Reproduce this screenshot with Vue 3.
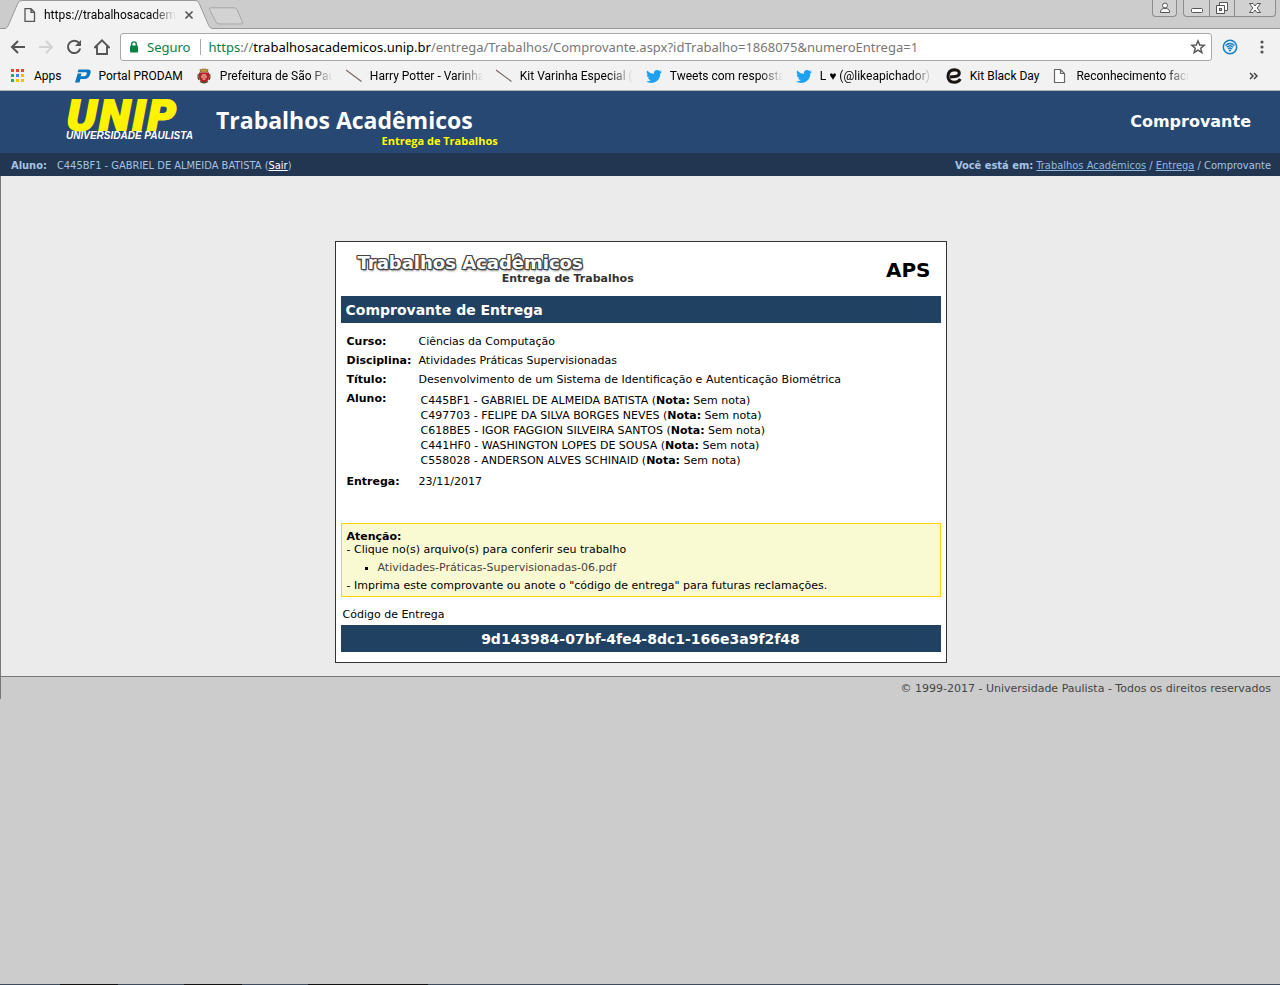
<script setup>
const bookmarks = [
  { icon: 'apps', label: 'Apps' },
  { icon: 'prodam', label: 'Portal PRODAM' },
  { icon: 'crest', label: 'Prefeitura de São Pau', long: true },
  { icon: 'wand', label: 'Harry Potter - Varinha', long: true },
  { icon: 'wand', label: 'Kit Varinha Especial (s', long: true },
  { icon: 'bird', label: 'Tweets com respostas', long: true },
  { icon: 'bird', label: 'L ♥ (@likeapichador)', long: true },
  { icon: 'e', label: 'Kit Black Day' },
  { icon: 'page', label: 'Reconhecimento facia', long: true },
]
const dots = [
  '#ea4335', '#ea4335', '#ea4335',
  '#34a853', '#4285f4', '#fbbc05',
  '#34a853', '#fbbc05', '#fbbc05',
]
const students = [
  'C445BF1 - GABRIEL DE ALMEIDA BATISTA',
  'C497703 - FELIPE DA SILVA BORGES NEVES',
  'C618BE5 - IGOR FAGGION SILVEIRA SANTOS',
  'C441HF0 - WASHINGTON LOPES DE SOUSA',
  'C558028 - ANDERSON ALVES SCHINAID',
]
</script>

<template>
  <div class="window">
    <div class="chrome">
      <div class="tabstrip">
        <div class="tab">
          <svg class="tab-shape" viewBox="0 0 208 29" width="208" height="29" aria-hidden="true">
            <path d="M0 29 L2 27 L13 3 Q14 .5 17 .5 H190 Q193 .5 194 3 L205 27 Q206 28.5 208 28.5 V29 Z" fill="#f2f2f2" />
            <path d="M0 28.5 Q2 28 3 26 L13 3 Q14 .5 17 .5 H190 Q193 .5 194 3 L204 26 Q205 28.500 208 28.500" fill="none" stroke="#999" />
          </svg>
          <svg class="tab-icon" viewBox="0 0 12 14" width="12" height="14" aria-hidden="true">
            <path d="M1 .7 H7 L10.500 4.200 V13.300 H1 Z M7 .7 V4.300 H10.500" fill="none" stroke="#555" stroke-width="1.300" />
          </svg>
          <span class="tab-title fade">https://trabalhosacademi</span>
          <button class="plain tab-close" aria-label="Fechar guia">
            <svg viewBox="0 0 10 10" width="10" height="10"><path d="M1.500 1.500 L8.500 8.500 M8.500 1.500 L1.500 8.500" stroke="#555" stroke-width="1.700" /></svg>
          </button>
        </div>
        <button class="plain new-tab" aria-label="Nova guia">
          <svg viewBox="0 0 36 18" width="36" height="18"><path d="M3 .8 H26 Q28 .8 29 2.500 L34.500 15 Q35 17 33 17 H11 Q9 17 8 15 L1.500 2.500 Q1 .8 3 .8 Z" fill="#d3d3d3" stroke="#a6a6a6" /></svg>
        </button>
        <div class="controls">
          <button class="plain user" aria-label="Usuário">
            <svg viewBox="0 0 12 12" width="12" height="12"><circle cx="6" cy="3.500" r="2.500" fill="#fff" stroke="#555" /><path d="M1.500 10.500 V9 Q2 7 4.500 6.500 H7.500 Q10 7 10.500 9 V10.500 Z" fill="#fff" stroke="#555" /></svg>
          </button>
          <div class="win-buttons">
            <button class="plain" aria-label="Minimizar">
              <svg viewBox="0 0 14 14" width="14" height="14"><rect x="1.500" y="7.500" width="11" height="4" rx="1" fill="#fff" stroke="#555" /></svg>
            </button>
            <button class="plain" aria-label="Restaurar">
              <svg viewBox="0 0 14 14" width="14" height="14"><path d="M4.500 1.500 H12.500 V9.500 H4.500 Z" fill="#fff" stroke="#555" /><path d="M1.500 4.500 H9.500 V12.500 H1.500 Z" fill="#fff" stroke="#555" /><rect x="4.500" y="7.500" width="2" height="2" fill="#ccc" stroke="#555" /></svg>
            </button>
            <button class="plain wide" aria-label="Fechar">
              <svg viewBox="0 0 14 12" width="14" height="12"><path d="M1.500 1.500 H5 L7 4 L9 1.500 H12.500 L9.200 6 L12.500 10.500 H9 L7 8 L5 10.500 H1.500 L4.800 6 Z" fill="#fff" stroke="#555" /></svg>
            </button>
          </div>
        </div>
      </div>

      <div class="toolbar">
        <button class="plain" aria-label="Voltar">
          <svg viewBox="0 0 16 16" width="16" height="16"><path d="M15 8 H2.500 M8 2 L2 8 L8 14" fill="none" stroke="#555" stroke-width="2" /></svg>
        </button>
        <button class="plain" aria-label="Avançar">
          <svg viewBox="0 0 16 16" width="16" height="16"><path d="M1 8 H13.500 M8 2 L14 8 L8 14" fill="none" stroke="#d2d2d2" stroke-width="2" /></svg>
        </button>
        <button class="plain" aria-label="Recarregar">
          <svg viewBox="0 0 16 16" width="16" height="16"><path d="M13.200 4.200 A6.200 6.200 0 1 0 14.200 9.500" fill="none" stroke="#555" stroke-width="2" /><path d="M15 1 V7 H9 Z" fill="#555" /></svg>
        </button>
        <button class="plain" aria-label="Página inicial">
          <svg viewBox="1 0 16 16" width="16" height="16"><path d="M2 8.300 L9 1.400 L16 8.300 H14 V15 H4 V8.300 Z" fill="none" stroke="#555" stroke-width="1.900" /></svg>
        </button>
        <div class="address">
          <svg viewBox="0 0 10 12" width="10" height="12" aria-hidden="true"><rect x="1" y="4.500" width="8" height="7" rx="1" fill="#0b8043" /><path d="M2.700 5 V3.200 A2.300 2.300 0 0 1 7.300 3.200 V5" fill="none" stroke="#0b8043" stroke-width="1.400" /></svg>
          <span class="secure">Seguro</span>
          <span class="url"><span class="green">https</span>://<span class="host">trabalhosacademicos.unip.br</span>/entrega/Trabalhos/Comprovante.aspx?idTrabalho=1868075&amp;numeroEntrega=1</span>
          <input class="address-input" type="text" aria-label="Barra de endereço" />
          <button class="plain star" aria-label="Favoritar">
            <svg viewBox="0 0 16 16" width="16" height="16"><path d="M8 1.800 L9.700 6 L14.200 6.300 L10.700 9.200 L11.900 13.700 L8 11.200 L4.100 13.700 L5.300 9.200 L1.800 6.300 L6.300 6 Z" fill="none" stroke="#555" stroke-width="1.400" /></svg>
          </button>
        </div>
        <button class="plain ext" aria-label="Extensão de rede">
          <svg viewBox="0 0 16 16" width="16" height="16"><circle cx="8" cy="8" r="6.700" fill="#e3f1fa" stroke="#1d7dbf" stroke-width="1.500" /><path d="M3.500 6.500 Q8 2.600 12.500 6.500 M4.800 8.300 Q8 5.300 11.200 8.300 M6.200 10 Q8 8.200 9.800 10" fill="none" stroke="#1d7dbf" stroke-width="1.400" /><circle cx="8" cy="11.500" r="1.100" fill="#1d7dbf" /></svg>
        </button>
        <button class="plain menu" aria-label="Menu">
          <svg viewBox="0 0 4 14" width="4" height="14"><circle cx="2" cy="2" r="1.600" fill="#555" /><circle cx="2" cy="7" r="1.600" fill="#555" /><circle cx="2" cy="12" r="1.600" fill="#555" /></svg>
        </button>
      </div>

      <nav class="bookmarks" aria-label="Favoritos">
        <a v-for="(b, i) in bookmarks" :key="i" href="#" class="bookmark">
          <svg viewBox="0 0 16 16" width="16" height="16" aria-hidden="true">
            <template v-if="b.icon === 'apps'">
              <rect v-for="(c, n) in dots" :key="n" :x="1 + (n % 3) * 5" :y="1 + Math.floor(n / 3) * 5" width="3" height="3" :fill="c" />
            </template>
            <template v-else-if="b.icon === 'prodam'">
              <path d="M3.500 1.500 H13 Q16.500 1.500 15.500 5 Q14.500 10.500 10 11 H5.500 L4.500 14.500 H0 L2.700 5.500 H6.500 L5.800 8.200 H9.500 Q11.300 8 11.800 5.800 Q12.200 4.200 10.800 4.200 H2.500 Z" fill="#0878c4" />
            </template>
            <template v-else-if="b.icon === 'crest'">
              <path d="M4 1.500 L5.500 2 L6.500 .8 L8 1.500 L9.500 .8 L10.500 2 L12 1.500 L11.500 4 H4.500 Z" fill="#c8a23a" stroke="#7a5a22" stroke-width=".8" />
              <path d="M3 4.500 H13 V10 Q12 14 8 15 Q4 14 3 10 Z" fill="#b81f28" />
              <path d="M6 6 H10 V7.500 H11 V10 H9.500 V12 H6.500 V10 H5 V7.500 H6 Z" fill="#d98078" />
              <path d="M2.500 6 Q1.500 9 3 12 M13.500 6 Q14.500 9 13 12 M4 13.500 Q8 16 12 13.500" stroke="#4f4b2c" stroke-width="1.300" fill="none" />
            </template>
            <template v-else-if="b.icon === 'wand'">
              <path d="M0 2 L15.500 13.500" stroke="#75655f" stroke-width="1.100" />
            </template>
            <template v-else-if="b.icon === 'bird'">
              <path d="M16 3.500 Q15.200 4 14.200 4.100 Q15.200 3.400 15.600 2.300 Q14.600 2.900 13.500 3.100 A3.250 3.250 0 0 0 7.900 6 Q3.700 5.700 1.100 2.600 Q-.1 5.300 2.200 7 Q1.400 7 .7 6.600 Q.8 9.100 3.300 9.800 Q2.600 10 1.900 9.900 Q2.700 12 4.900 12.100 Q2.900 13.700 0 13.500 Q4.500 16 8.800 14.200 Q14.300 11.600 14.400 5.200 Q15.300 4.600 16 3.500 Z" fill="#1da1f2" />
            </template>
            <template v-else-if="b.icon === 'e'">
              <path d="M14.300 11 Q12.500 14.300 8.300 14.300 Q2 14 2 8.300 Q2.300 2 8.500 1.800 Q13.300 2 13.300 5.300 Q13.200 8.300 9 8.600 L4 9" fill="none" stroke="#1a1411" stroke-width="3" />
            </template>
            <template v-else>
              <path d="M2.500 1.500 H8.500 L12.500 5.500 V14.500 H2.500 Z M8.500 1.500 V5.500 H12.500" fill="#fff" stroke="#666" stroke-width="1.200" />
            </template>
          </svg>
          <span :class="{ fade: b.long, long: b.long }">{{ b.label }}</span>
        </a>
        <button class="plain more" aria-label="Mais favoritos">
          <svg viewBox="0 0 9 8" width="9" height="8"><path d="M1 1 L4 4 L1 7 M5 1 L8 4 L5 7" fill="none" stroke="#444" stroke-width="1.500" /></svg>
        </button>
      </nav>
    </div>

    <header class="banner">
      <div class="unip">
        <span class="unip-name">UNIP</span>
        <span class="unip-sub">UNIVERSIDADE PAULISTA</span>
      </div>
      <div class="system">
        <span class="system-name">Trabalhos Acadêmicos</span>
        <span class="system-sub">Entrega de Trabalhos</span>
      </div>
      <h1>Comprovante</h1>
    </header>
    <div class="crumbs">
      <div><b class="who">Aluno:</b>C445BF1 - GABRIEL DE ALMEIDA BATISTA (<a href="#" class="exit">Sair</a>)</div>
      <div><b>Você está em:</b> <a href="#">Trabalhos Acadêmicos</a> / <a href="#">Entrega</a> / Comprovante</div>
    </div>

    <main>
      <section class="card">
        <div class="card-head">
          <div class="mark">
            <span class="mark-name">Trabalhos Acadêmicos</span>
            <span class="mark-sub">Entrega de Trabalhos</span>
          </div>
          <strong class="kind">APS</strong>
        </div>
        <h2>Comprovante de Entrega</h2>
        <table>
          <tbody>
            <tr><th scope="row">Curso:</th><td>Ciências da Computação</td></tr>
            <tr><th scope="row">Disciplina:</th><td>Atividades Práticas Supervisionadas</td></tr>
            <tr><th scope="row">Título:</th><td>Desenvolvimento de um Sistema de Identificação e Autenticação Biométrica</td></tr>
            <tr>
              <th scope="row">Aluno:</th>
              <td><ul class="students"><li v-for="s in students" :key="s">{{ s }} (<b>Nota:</b> Sem nota)</li></ul></td>
            </tr>
            <tr><th scope="row">Entrega:</th><td>23/11/2017</td></tr>
          </tbody>
        </table>
        <div class="notice">
          <b>Atenção:</b>
          <p>- Clique no(s) arquivo(s) para conferir seu trabalho</p>
          <ul><li><a href="#">Atividades-Práticas-Supervisionadas-06.pdf</a></li></ul>
          <p>- Imprima este comprovante ou anote o "código de entrega" para futuras reclamações.</p>
        </div>
        <p class="code-label">Código de Entrega</p>
        <p class="code">9d143984-07bf-4fe4-8dc1-166e3a9f2f48</p>
      </section>
    </main>
    <footer>© 1999-2017 - Universidade Paulista - Todos os direitos reservados</footer>
    <div class="taskbar"></div>
  </div>
</template>

<style>
body { margin: 0; background: #ccc; }
</style>

<style scoped>
.window {
  min-height: 100vh;
  display: flex;
  flex-direction: column;
  background: #ccc;
  font: 11px/15px "DejaVu Sans", Verdana, sans-serif;
  color: #000;
}
p, h1, h2, ul { margin: 0; padding: 0; }
.plain {
  display: flex;
  align-items: center;
  justify-content: center;
  padding: 0;
  border: 0;
  background: none;
}
svg { display: block; flex: none; }
.fade {
  overflow: hidden;
  white-space: nowrap;
  mask-image: linear-gradient(to left, transparent, #000 24px);
}

.chrome { background: #f2f2f2; border-bottom: 1px solid #b3b3b3; font: 12px/16px Roboto, "Segoe UI", sans-serif; }
.tabstrip { display: flex; height: 29px; padding-left: 5px; background: #ccc; box-shadow: inset 0 -1px #999; }
.tab { position: relative; display: flex; align-items: center; width: 207px; box-sizing: border-box; padding: 1px 18px 0 19px; }
.tab-shape { position: absolute; left: 0; top: 0; }
.tab-icon, .tab-title, .tab-close { position: relative; }
.tab-title { flex: 1; margin: 0 8px; }
.new-tab { align-self: center; margin: 2px 0 0 -4px; }
.controls { display: flex; align-items: flex-start; gap: 6px; margin-left: auto; padding-right: 4px; }
.user, .win-buttons { height: 17px; box-sizing: border-box; border: 1px solid #8c8c8c; border-top: 0; border-radius: 0 0 4px 4px; background: #d1d1d1; }
.user { width: 25px; }
.win-buttons { display: flex; }
.win-buttons button { width: 25px; }
.win-buttons button + button { border-left: 1px solid #8c8c8c; }
.win-buttons .wide { width: 41px; }

.toolbar { display: flex; align-items: center; gap: 12px; height: 32px; box-sizing: border-box; padding: 4px 8px 0 10px; }
.address {
  position: relative;
  flex: 1;
  display: flex;
  align-items: center;
  height: 28px;
  box-sizing: border-box;
  margin: 0 -2px;
  padding: 0 5px 0 8px;
  border: 1px solid #a9a9a9;
  border-radius: 3px;
  background: #fff;
  font-family: "Noto Sans", "Segoe UI", sans-serif;
  font-size: 13px;
  white-space: nowrap;
}
.secure { margin-left: 8px; padding-right: 10px; border-right: 1px solid #aaa; color: #0b8043; }
.url { margin-left: 7px; color: #777; }
.green { color: #0b8043; }
.host { color: #000; }
.address-input { position: absolute; inset: 0; width: 100%; box-sizing: border-box; border: 0; background: transparent; font: inherit; }
.star { position: relative; margin-left: auto; }
.menu { width: 20px; margin-left: 2px; }

.bookmarks { display: flex; align-items: center; gap: 13px; height: 29px; padding: 0 22px 0 10px; }
.bookmark { display: flex; align-items: center; gap: 8px; color: #000; text-decoration: none; white-space: nowrap; }
.long { width: 113px; }
.more { margin-left: auto; }

.banner { display: flex; align-items: flex-start; height: 62px; padding: 0 29px 0 66px; background: #274872; color: #fff; }
.unip { display: flex; flex-direction: column; width: 150px; padding-top: 10px; font-style: italic; font-weight: bold; }
.unip-name { font-size: 40px; line-height: 30px; color: #fff200; -webkit-text-stroke: 2px #fff200; }
.unip-sub { font: italic bold 10px/10px "Liberation Sans", Arial, sans-serif; white-space: nowrap; }
.system { display: flex; flex-direction: column; padding-top: 15px; font-family: "Open Sans", sans-serif; font-weight: bold; white-space: nowrap; }
.system-name { font-size: 23px; line-height: 28px; }
.system-sub { margin-right: -25px; font-size: 11px; line-height: 14px; text-align: right; color: #ff0; }
h1 { margin-left: auto; align-self: center; font: bold 16px/20px "DejaVu Sans", Verdana, sans-serif; }

.crumbs { display: flex; justify-content: space-between; padding: 5px 9px 3px 11px; background: #223551; color: #a5c3e3; font-family: "DejaVu Sans Condensed", Tahoma, sans-serif; }
.crumbs a { color: #8fb9e3; }
.crumbs .exit { color: #fff; }
.who { margin-right: 10px; }

main { box-sizing: border-box; padding: 65px 20px 13px; border-left: 1px solid #777; background: #ebebeb; }
.card { max-width: 600px; margin: 0 auto; padding: 5px 5px 10px; border: 1px solid #333; background: #fff; }
.card-head { display: flex; justify-content: space-between; height: 49px; padding: 0 10px 0 17px; }
.mark { display: flex; flex-direction: column; padding-top: 6px; font-weight: bold; }
.mark-name {
  font-size: 18px;
  line-height: 20px;
  color: #fff;
  text-shadow: -1px -1px #444, 1px -1px #444, -1px 1px #444, 1px 1px #444, 0 1px #444, 1px 0 #444, -1px 0 #444, 0 -1px #444, 1px 2px 2px #777;
}
.mark-sub { margin-right: -51px; text-align: right; line-height: 12px; color: #333; }
.kind { padding-top: 11px; font-size: 20px; line-height: 24px; }
h2, .code { padding: 5px 5px 3px; background: #204162; color: #fff; font-size: 14px; line-height: 19px; font-weight: bold; }
.code { text-align: center; }
table { margin: 9px 0 32px 4px; border-collapse: collapse; }
th, td { padding: 2px; text-align: left; vertical-align: top; }
th { width: 68px; }
.students { padding: 2px; list-style: none; }
.notice { padding: 6px 5px 4px; border: 1px solid #ffd200; background: #fafad2; line-height: 13px; }
.notice ul { padding: 5px 0 5px 31px; list-style: square; }
.notice a { color: #444; text-decoration: none; }
.code-label { padding: 10px 2px 3px; }
footer { padding: 4px 9px 3px; border-top: 1px solid #777; border-left: 1px solid #777; text-align: right; color: #444; }
.taskbar {
  height: 1px;
  margin-top: auto;
  background: linear-gradient(to right, #3f4a5a 60px, #111 60px 118px, #3f4a5a 118px 184px, #111 184px 242px, #3f4a5a 242px 308px, #111 308px 428px, #3f4a5a 428px);
}
</style>
